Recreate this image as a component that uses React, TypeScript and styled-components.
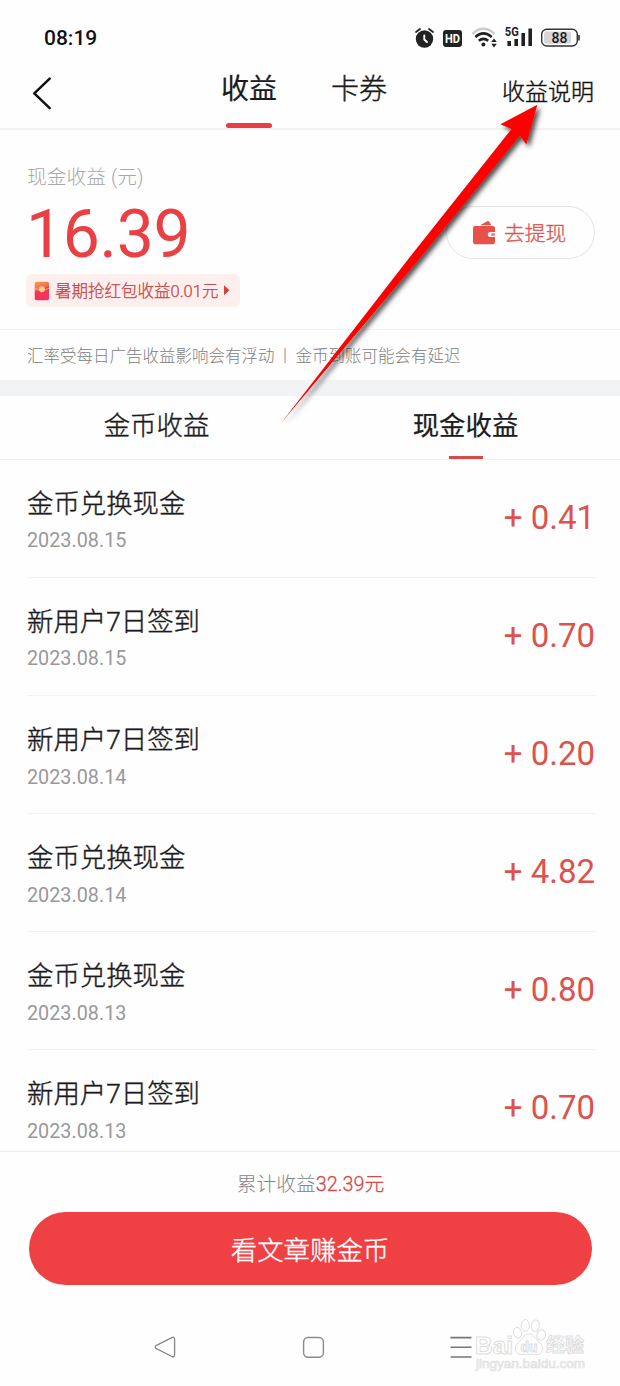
import React from "react";
import styled, { createGlobalStyle } from "styled-components";

const GlobalStyle = createGlobalStyle`
  * { box-sizing: border-box; }
  body {
    margin: 0;
    background: #fefefe;
    font-family: Roboto, "Noto Sans CJK SC", sans-serif;
    color: #1c1c1e;
  }
  button { font-family: inherit; cursor: pointer; }
`;

const Screen = styled.div`
  position: relative;
  display: flex;
  flex-direction: column;
  width: 620px;
  height: 1386px;
  overflow: hidden;
  background: #fefefe;
`;

const StatusBar = styled.header`
  display: flex;
  align-items: center;
  justify-content: space-between;
  height: 60px;
  padding: 16px 40px 0 44px;
`;

const Clock = styled.time`
  font-size: 21px;
  font-weight: 500;
  line-height: 28px;
  color: #111;
`;

const StatusIcons = styled.svg`
  display: block;
  width: 168px;
  height: 26px;
`;

const NavBar = styled.nav`
  display: grid;
  grid-template-columns: 195px 1fr 195px;
  height: 70px;
  border-bottom: 2px solid #f2f2f3;
`;

const BackButton = styled.button`
  display: flex;
  align-items: flex-start;
  padding: 16px 0 0 31px;
  border: 0;
  background: none;
`;

const NavTabs = styled.div`
  display: flex;
  justify-content: center;
  gap: 54px;
  margin-left: -12px;
`;

const NavTab = styled.div<{ $active?: boolean }>`
  display: flex;
  flex-direction: column;
  align-items: center;
  justify-content: space-between;
  height: 68px;
  padding-top: 10px;
  font-size: 28px;
  font-weight: ${(p) => (p.$active ? 400 : 300)};
  line-height: 40px;
  -webkit-text-stroke: ${(p) => (p.$active ? "0.2px" : "0.4px")} #1c1c1e;
`;

const NavMarker = styled.span`
  width: 46px;
  height: 5px;
  border-radius: 3px;
  background: #e84042;
`;

const HelpLink = styled.span`
  padding: 16px 26px 0 0;
  text-align: right;
  font-size: 23px;
  font-weight: 300;
  line-height: 34px;
  color: #111;
  -webkit-text-stroke: 0.4px #111;
`;

const Balance = styled.section`
  display: flex;
  justify-content: space-between;
  height: 200px;
  padding: 33px 25px 0 26px;
  border-bottom: 1px solid #f3f3f4;
`;

const BalanceInfo = styled.div`
  display: flex;
  flex-direction: column;
  align-items: flex-start;
`;

const BalanceLabel = styled.span`
  padding-left: 1px;
  font-size: 19.8px;
  font-weight: 300;
  line-height: 30px;
  color: #a8a8a8;
`;

const BalanceValue = styled.strong`
  padding: 4px 0 0 0;
  font-size: 66px;
  font-weight: 400;
  line-height: 76px;
  letter-spacing: -0.3px;
  color: #e84044;
`;

const Promo = styled.div`
  display: flex;
  align-items: center;
  gap: 5px;
  width: 214px;
  height: 33px;
  margin-top: 1px;
  padding-left: 8px;
  border-radius: 6px;
  background: #feefef;
  font-size: 16.5px;
  line-height: 33px;
  white-space: nowrap;
  color: #c8413f;
`;

const PromoText = styled.span`
  padding-top: 2px;
  font-weight: 300;
  -webkit-text-stroke: 0.25px #c8413f;
`;

const WithdrawButton = styled.button`
  display: flex;
  align-items: center;
  gap: 8px;
  width: 149px;
  height: 53px;
  margin-top: 43px;
  padding: 0 0 1px 25px;
  border: 1px solid #e3e3e3;
  border-radius: 27px;
  background: #fefefe;
  font-size: 20.8px;
  font-weight: 300;
  color: #e0524e;
  -webkit-text-stroke: 0.3px #e0524e;
`;

const Notice = styled.p`
  height: 66px;
  margin: 0;
  padding: 1px 0 0 27px;
  border-bottom: 16px solid #f2f3f5;
  font-size: 16.5px;
  font-weight: 300;
  line-height: 52px;
  color: #808080;
`;

const NoticeDivider = styled.span`
  display: inline-flex;
  justify-content: center;
  width: 21px;
`;

const Tabs = styled.div`
  display: grid;
  grid-template-columns: 1fr 1fr;
  height: 64px;
  padding-left: 2px;
  border-bottom: 1px solid #f1f1f2;
`;

const Tab = styled.div<{ $active?: boolean }>`
  display: flex;
  flex-direction: column;
  align-items: center;
  justify-content: space-between;
  padding-top: 10px;
  font-size: 26.4px;
  font-weight: ${(p) => (p.$active ? 400 : 300)};
  line-height: 40px;
  -webkit-text-stroke: ${(p) => (p.$active ? "0.25px" : "0.4px")} #1c1c1e;
`;

const TabMarker = styled.span`
  width: 34px;
  height: 3px;
  background: #d84a4a;
`;

const Records = styled.ul`
  flex: 1;
  min-height: 0;
  margin: 0;
  padding: 0 25px 0 27px;
  overflow: hidden;
  list-style: none;
`;

const Record = styled.li`
  display: flex;
  justify-content: space-between;
  height: 118.1px;
  padding-top: 24px;
  border-bottom: 1px solid #f3f3f3;
`;

const RecordTitle = styled.div`
  font-size: 26.4px;
  font-weight: 300;
  line-height: 40px;
  -webkit-text-stroke: 0.4px #1c1c1e;
`;

const RecordDate = styled.div`
  padding-top: 2.4px;
  font-size: 19.8px;
  line-height: 30px;
  color: #999;
`;

const Amount = styled.div`
  padding-top: 10px;
  font-size: 33px;
  line-height: 48px;
  color: #dc524d;
`;

const Footer = styled.footer`
  display: flex;
  flex-direction: column;
  align-items: center;
  height: 157px;
  padding-top: 18px;
  border-top: 1px solid #ededee;
`;

const Total = styled.div`
  padding-left: 1px;
  font-size: 19.8px;
  font-weight: 300;
  line-height: 30px;
  color: #858585;
`;

const TotalValue = styled.span`
  color: #d34b49;
  -webkit-text-stroke: 0.3px #d34b49;
`;

const ReadButton = styled.button`
  width: 563px;
  height: 73px;
  margin-top: 12px;
  padding: 0;
  border: 0;
  border-radius: 37px;
  background: #ef4043;
  font-size: 26.4px;
  font-weight: 300;
  color: #fff;
  -webkit-text-stroke: 0.35px #fff;
`;

const SystemNav = styled.div`
  display: flex;
  height: 78px;
`;

const SystemIcons = styled.svg`
  display: block;
  width: 620px;
  height: 78px;
`;

const PointerOverlay = styled.svg`
  position: absolute;
  left: 270px;
  top: 90px;
  width: 290px;
  height: 350px;
  pointer-events: none;
`;

const records = [
  { title: "金币兑换现金", date: "2023.08.15", amount: "0.41" },
  { title: "新用户7日签到", date: "2023.08.15", amount: "0.70" },
  { title: "新用户7日签到", date: "2023.08.14", amount: "0.20" },
  { title: "金币兑换现金", date: "2023.08.14", amount: "4.82" },
  { title: "金币兑换现金", date: "2023.08.13", amount: "0.80" },
  { title: "新用户7日签到", date: "2023.08.13", amount: "0.70" },
];

function DeviceStatus() {
  return (
    <StatusIcons viewBox="412 25 168 26">
      {/* alarm */}
      <circle cx="424.5" cy="39" r="8.7" fill="#222" />
      <path d="M416 32 L420 29 M433 32 L429 29" stroke="#222" strokeWidth="1.8" strokeLinecap="round" />
      <path d="M424.3 35.5 V39.5 L427 42" stroke="#fff" strokeWidth="1.9" fill="none" strokeLinecap="round" />
      {/* HD */}
      <rect x="443" y="30" width="19" height="17" rx="3" fill="#222" />
      <text x="452.5" y="42.9" textAnchor="middle" fontSize="12" fontWeight="700" fill="#fff" textLength="15" lengthAdjust="spacingAndGlyphs">HD</text>
      {/* wifi */}
      <g fill="none" strokeLinecap="butt">
        <path d="M472.5 33.8 Q483.5 23.8 494.5 33.8" stroke="#ccc" strokeWidth="2.4" />
        <path d="M475.3 37 Q483.5 29.8 491.7 37" stroke="#222" strokeWidth="2.6" />
        <path d="M478.8 40.8 Q483.5 36.8 488.2 40.8" stroke="#222" strokeWidth="2.6" />
      </g>
      <circle cx="483.4" cy="44.6" r="2" fill="#222" />
      <path d="M491.2 42 L494 38.4 L496.8 42 Z M491.2 43.8 L494 47.4 L496.8 43.8 Z" fill="#222" />
      {/* signal */}
      <text x="504.8" y="36.4" fontSize="12" fontWeight="700" fill="#222" textLength="14" lengthAdjust="spacingAndGlyphs">5G</text>
      <path d="M507.4 41 h3.6 v5 h-3.6z M514.4 39 h3.6 v7 h-3.6z M521.4 33 h3.6 v13 h-3.6z M528.4 28.5 h3.6 v17.5 h-3.6z" fill="#222" />
      {/* battery */}
      <rect x="541.7" y="29.2" width="35.6" height="16.8" rx="5" fill="#fefefe" stroke="#333" strokeWidth="1.4" />
      <rect x="544" y="31.5" width="27" height="12.2" rx="2.5" fill="#d6d6d6" />
      <path d="M579 35 v5.4" stroke="#333" strokeWidth="1.6" />
      <text x="559.5" y="42.7" textAnchor="middle" fontSize="14" fontWeight="500" fill="#1a1a1a">88</text>
    </StatusIcons>
  );
}

function RedPacketIcon() {
  return (
    <svg width="16" height="20" viewBox="0 0 16 20">
      <defs>
        <linearGradient id="packet" x1="0" y1="0" x2="0.3" y2="1">
          <stop offset="0" stopColor="#f7a04a" />
          <stop offset="0.45" stopColor="#f4694e" />
          <stop offset="0.55" stopColor="#f0384e" />
          <stop offset="1" stopColor="#f52f68" />
        </linearGradient>
      </defs>
      <rect x="0.7" y="0.8" width="14.4" height="18.4" rx="2" fill="url(#packet)" />
      <path d="M0.7 7 Q8 11.5 15.1 7" fill="none" stroke="#fcae78" strokeWidth="0.9" />
      <circle cx="7.9" cy="8.2" r="3" fill="#fbd08c" />
    </svg>
  );
}

function WalletIcon() {
  return (
    <svg width="24" height="25" viewBox="0 0 24 25">
      <path d="M8 5.2 L15.2 1.2 Q16.5 0.7 17.3 1.8 L19.3 5.2 Z" fill="#e8504c" />
      <path d="M3 6 H21 Q23 6 23 8 V12 H18.4 Q15.8 12 15.8 14.5 Q15.8 17 18.4 17 H23 V22 Q23 24.2 21 24.2 H3 Q1 24.2 1 22 V8 Q1 6 3 6 Z" fill="#e8504c" />
      <path d="M23 12.6 H18.4 Q16.4 12.6 16.4 14.5 Q16.4 16.4 18.4 16.4 H23 Z" fill="#fff" />
      <path d="M23 13.3 H19.2 V15.8 H23 Z" fill="#ef7975" />
    </svg>
  );
}

function SystemBar() {
  return (
    <SystemNav>
      <SystemIcons viewBox="0 1308 620 78">
        <g fill="none" stroke="#8b8b8b" strokeWidth="1.4" strokeLinejoin="round">
          <path d="M156 1345.7 L171.8 1337.6 Q174.6 1336.5 174.6 1339.4 V1354.8 Q174.6 1357.6 171.8 1356.5 L156 1348.4 Q154.5 1347 156 1345.7 Z" />
          <rect x="303.6" y="1337.5" width="19.8" height="19.8" rx="4.5" />
        </g>
        <path d="M450.5 1337.6 H471.5 M450.5 1347.3 H471.5 M450.5 1357 H471.5" stroke="#777" strokeWidth="1.6" />
        <g fill="#fefefe" stroke="#dedede" strokeWidth="1" fontFamily='"Liberation Sans", sans-serif' fontWeight="700">
          <text x="475" y="1353.5" fontSize="24" textLength="38" lengthAdjust="spacingAndGlyphs">Bai</text>
          <ellipse cx="517.5" cy="1332.7" rx="4" ry="5.4" transform="rotate(-15 517.5 1332.7)" />
          <ellipse cx="525.3" cy="1325.3" rx="4" ry="5.8" />
          <ellipse cx="535.3" cy="1325.8" rx="4" ry="5.8" transform="rotate(10 535.3 1325.8)" />
          <ellipse cx="541.2" cy="1335" rx="4.3" ry="5.2" transform="rotate(15 541.2 1335)" />
          <path d="M529 1334 C534 1334 536 1340 540 1343 C545 1347 543 1355 536 1354.6 C531 1354 527 1354 522 1354.6 C515 1355 513 1347 518 1343 C522 1340 523 1334 529 1334 Z" />
          <text x="520.5" y="1352" fontSize="15" textLength="17" lengthAdjust="spacingAndGlyphs">du</text>
          <text x="546" y="1352" fontSize="19" fontFamily='"Noto Sans CJK SC", sans-serif'>经验</text>
        </g>
        <text x="476" y="1368" fontSize="12" fontFamily='"Liberation Sans", sans-serif' fill="#fefefe" stroke="#e0e0e0" strokeWidth="0.7" textLength="109" lengthAdjust="spacingAndGlyphs">jingyan.baidu.com</text>
      </SystemIcons>
    </SystemNav>
  );
}

function PointerArrow() {
  return (
    <PointerOverlay viewBox="270 90 290 350">
      <defs>
        <filter id="arrowShadow" x="-10%" y="-10%" width="125%" height="125%">
          <feDropShadow dx="3" dy="3" stdDeviation="2.6" floodColor="#000" floodOpacity="0.7" />
        </filter>
      </defs>
      <path
        d="M537.3 104.8 L500.5 124.3 L511.5 129 L409.5 257.5 L281.5 422.5 L420.5 257.5 L520 135.5 L526.3 144.5 Z"
        fill="#fe0000"
        filter="url(#arrowShadow)"
      />
    </PointerOverlay>
  );
}

export default function App() {
  return (
    <>
      <GlobalStyle />
      <Screen>
        <StatusBar>
          <Clock>08:19</Clock>
          <DeviceStatus />
        </StatusBar>
        <NavBar>
          <BackButton aria-label="返回">
            <svg width="22" height="36" viewBox="31 76 22 36">
              <path d="M49.7 78.6 L34.3 93.3 L49.7 108.2" fill="none" stroke="#111" strokeWidth="2.5" strokeLinecap="round" strokeLinejoin="round" />
            </svg>
          </BackButton>
          <NavTabs>
            <NavTab $active>
              收益
              <NavMarker />
            </NavTab>
            <NavTab>卡券</NavTab>
          </NavTabs>
          <HelpLink>收益说明</HelpLink>
        </NavBar>
        <Balance>
          <BalanceInfo>
            <BalanceLabel>现金收益 (元)</BalanceLabel>
            <BalanceValue>16.39</BalanceValue>
            <Promo>
              <RedPacketIcon />
              <PromoText>暑期抢红包收益0.01元</PromoText>
              <svg width="7" height="11" viewBox="0 0 7 11">
                <path d="M1 0.3 L6.5 5.3 L1 10.3 Z" fill="#d3403e" />
              </svg>
            </Promo>
          </BalanceInfo>
          <WithdrawButton>
            <WalletIcon />
            去提现
          </WithdrawButton>
        </Balance>
        <Notice>
          汇率受每日广告收益影响会有浮动<NoticeDivider>丨</NoticeDivider>金币到账可能会有延迟
        </Notice>
        <Tabs>
          <Tab>金币收益</Tab>
          <Tab $active>
            现金收益
            <TabMarker />
          </Tab>
        </Tabs>
        <Records>
          {records.map((r, i) => (
            <Record key={i}>
              <div>
                <RecordTitle>{r.title}</RecordTitle>
                <RecordDate>{r.date}</RecordDate>
              </div>
              <Amount>+ {r.amount}</Amount>
            </Record>
          ))}
        </Records>
        <Footer>
          <Total>
            累计收益<TotalValue>32.39元</TotalValue>
          </Total>
          <ReadButton>看文章赚金币</ReadButton>
        </Footer>
        <SystemBar />
        <PointerArrow />
      </Screen>
    </>
  );
}
